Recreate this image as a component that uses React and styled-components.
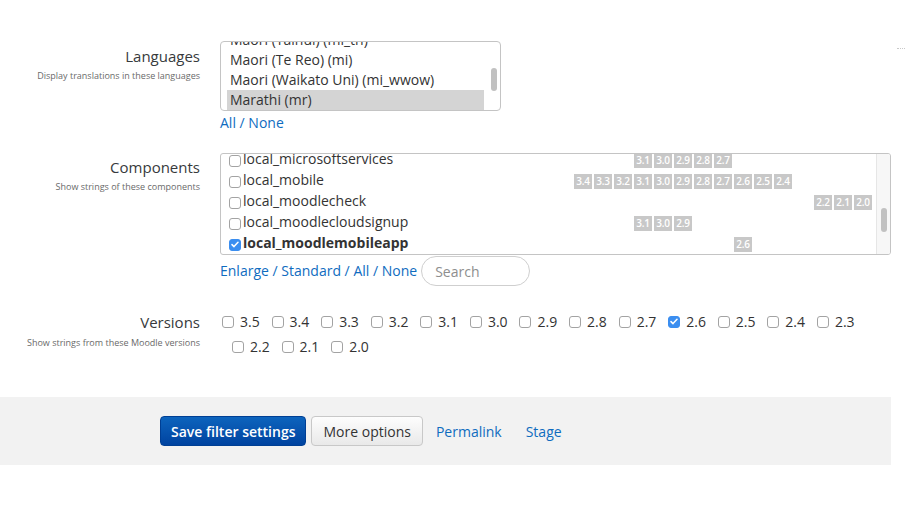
import React from "react";
import styled, { createGlobalStyle } from "styled-components";

const Global = createGlobalStyle`
  html, body { margin: 0; padding: 0; background: #fff; }
  body { font-family: "Open Sans", "Liberation Sans", sans-serif; color: #373a3c; }
  * { box-sizing: border-box; }
`;

const Page = styled.div`
  display: flex;
  width: 905px;
`;

const Main = styled.div`
  width: 891px;
  padding-top: 41px;
`;

const Side = styled.div`
  width: 14px;
  padding: 48px 0 0 6px;
`;

const Dots = styled.div`
  width: 8px;
  border-top: 1px dotted #c8c8c8;
`;

const Form = styled.div`
  display: flex;
  flex-direction: column;
`;

const Row = styled.div`
  display: grid;
  grid-template-columns: 200px 1fr;
  column-gap: 20px;
  margin-top: ${(p) => p.$mt || 0}px;
`;

const LabelCol = styled.div`
  text-align: right;
  padding-top: ${(p) => p.$pt || 0}px;
`;

const Title = styled.div`
  font-size: 15px;
  line-height: 22px;
  color: #373a3c;
`;

const Desc = styled.div`
  font-size: 9px;
  line-height: 13px;
  color: #6a6a6a;
  margin-top: ${(p) => p.$mt || 2}px;
`;

const Content = styled.div`
  display: flex;
  flex-direction: column;
  align-items: flex-start;
`;

const SelectBox = styled.div`
  width: 281px;
  height: 70px;
  border: 1px solid #c4c4c4;
  border-radius: 4px;
  display: flex;
  overflow: hidden;
`;

const OptionList = styled.div`
  flex: 1;
  padding-left: 6px;
  margin-top: -12px;
`;

const Option = styled.div`
  font-size: 14px;
  line-height: 20px;
  height: 20px;
  padding-left: 3px;
  color: #333;
  white-space: nowrap;
  background: ${(p) => (p.$selected ? "#d4d4d4" : "transparent")};
`;

const Track = styled.div`
  width: ${(p) => p.$w}px;
  flex: none;
  padding-left: ${(p) => p.$pl}px;
  padding-top: ${(p) => p.$pt}px;
  background: ${(p) => p.$bg || "transparent"};
  border-left: ${(p) => (p.$border ? "1px solid #e6e6e6" : "none")};
`;

const Thumb = styled.div`
  width: 6px;
  height: ${(p) => p.$h}px;
  border-radius: 3px;
  background: #c1c1c1;
`;

const Links = styled.div`
  display: flex;
  align-items: center;
  font-size: 14px;
  line-height: 22px;
  color: #0f6cbf;
  white-space: pre;
  margin-top: ${(p) => p.$mt || 0}px;
  min-height: ${(p) => p.$h || 22}px;
`;

const Link = styled.a`
  color: #0f6cbf;
  text-decoration: none;
  cursor: pointer;
`;

const CompBox = styled.div`
  width: 671px;
  height: 102px;
  border: 1px solid #c4c4c4;
  border-radius: 3px;
  display: flex;
  overflow: hidden;
`;

const CompList = styled.div`
  flex: 1;
  margin-top: -6px;
  padding: 0 4px 0 8px;
`;

const CompRow = styled.div`
  display: grid;
  grid-template-columns: 1fr 318px;
  height: 21px;
  align-items: end;
`;

const CompName = styled.label`
  display: flex;
  align-items: center;
  gap: 2px;
  font-size: 14px;
  line-height: 21px;
  color: #333;
  font-weight: ${(p) => (p.$checked ? 700 : 400)};
  white-space: nowrap;
`;

const Box = styled.span`
  width: 12px;
  height: 12px;
  flex: none;
  border-radius: 3px;
  border: 1px solid ${(p) => (p.$checked ? "#3b8ef0" : "#a3a3a3")};
  background: ${(p) => (p.$checked ? "#3b8ef0" : "#fff")};
  display: inline-flex;
  align-items: center;
  justify-content: center;
  margin-top: ${(p) => p.$mt || 0}px;
`;

const Badges = styled.div`
  display: grid;
  grid-template-columns: repeat(16, 18px);
  column-gap: 2px;
  padding-bottom: 1px;
`;

const Badge = styled.span`
  height: 15px;
  background: #c8c8c8;
  color: #fff;
  font-size: 10px;
  font-weight: 600;
  line-height: 15px;
  text-align: center;
  letter-spacing: -0.2px;
`;

const Search = styled.input`
  width: 109px;
  height: 30px;
  border: 1px solid #cfcfcf;
  border-radius: 15px;
  padding: 0 13px;
  font-family: "Open Sans", "Liberation Sans", sans-serif;
  font-size: 14px;
  color: #333;
  outline: none;
  margin-left: 4px;
  &::placeholder { color: #8e8e8e; }
`;

const VersionWrap = styled.div`
  padding-left: 12px;
  text-indent: -10px;
  line-height: 25px;
  font-size: 14px;
  width: 671px;
`;

const VersionItem = styled.label`
  display: inline-flex;
  align-items: center;
  gap: 6px;
  text-indent: 0;
  margin-right: 11.9px;
  color: #333;
  font-size: 14px;
  line-height: 25px;
  vertical-align: top;
`;

const Footer = styled.div`
  margin-top: 38px;
  background: #f2f2f2;
  height: 68px;
  display: flex;
  align-items: center;
  padding-left: 160px;
  gap: 5px;
`;

const PrimaryButton = styled.button`
  height: 30px;
  padding: 0 10px;
  border-radius: 4px;
  border: 1px solid #003f94;
  background: linear-gradient(#0d64bd, #0043a0);
  color: #fff;
  font-family: "Open Sans", "Liberation Sans", sans-serif;
  font-weight: 600;
  font-size: 14px;
`;

const SecondaryButton = styled.button`
  height: 30px;
  padding: 0 11px;
  border-radius: 4px;
  border: 1px solid #c8c8c8;
  background: linear-gradient(#fdfdfd, #e9e9e9);
  color: #333;
  font-family: "Open Sans", "Liberation Sans", sans-serif;
  font-size: 14px;
`;

const FooterLink = styled.a`
  color: #0f6cbf;
  font-size: 14px;
  margin-left: ${(p) => p.$ml}px;
  text-decoration: none;
`;

const ALL_VERSIONS = ["3.5","3.4","3.3","3.2","3.1","3.0","2.9","2.8","2.7","2.6","2.5","2.4","2.3","2.2","2.1","2.0"];

const components = [
  { name: "local_microsoftservices", versions: ["3.1","3.0","2.9","2.8","2.7"] },
  { name: "local_mobile", versions: ["3.4","3.3","3.2","3.1","3.0","2.9","2.8","2.7","2.6","2.5","2.4"] },
  { name: "local_moodlecheck", versions: ["2.2","2.1","2.0"] },
  { name: "local_moodlecloudsignup", versions: ["3.1","3.0","2.9"] },
  { name: "local_moodlemobileapp", versions: ["2.6"], checked: true },
];

const languages = [
  "Maori (Tainui) (mi_tn)",
  "Maori (Te Reo) (mi)",
  "Maori (Waikato Uni) (mi_wwow)",
  "Marathi (mr)",
];

const Check = () => (
  <svg width="8" height="7" viewBox="0 0 8 7">
    <path d="M1 3.6 L3 5.6 L7 1.2" fill="none" stroke="#fff" strokeWidth="1.5" strokeLinecap="round" strokeLinejoin="round" />
  </svg>
);

const CheckBox = ({ checked, mt }) => (
  <Box $checked={checked} $mt={mt}>{checked && <Check />}</Box>
);

export default function App() {
  return (
    <>
      <Global />
      <Page>
        <Main>
          <Form>
            <Row>
              <LabelCol $pt={4}>
                <Title>Languages</Title>
                <Desc>Display translations in these languages</Desc>
              </LabelCol>
              <Content>
                <SelectBox>
                  <OptionList>
                    {languages.map((l, i) => (
                      <Option key={l} $selected={i === 3}>{l}</Option>
                    ))}
                  </OptionList>
                  <Track $w={16} $pl={7} $pt={26}>
                    <Thumb $h={23} />
                  </Track>
                </SelectBox>
                <Links $mt={1}>
                  <Link>All</Link>{" / "}<Link>None</Link>
                </Links>
              </Content>
            </Row>

            <Row $mt={19}>
              <LabelCol $pt={3}>
                <Title>Components</Title>
                <Desc>Show strings of these components</Desc>
              </LabelCol>
              <Content>
                <CompBox>
                  <CompList>
                    {components.map((c) => (
                      <CompRow key={c.name}>
                        <CompName $checked={c.checked}>
                          <CheckBox checked={c.checked} mt={4} />
                          {c.name}
                        </CompName>
                        <Badges>
                          {ALL_VERSIONS.map((v) =>
                            c.versions.includes(v) ? (
                              <Badge key={v}>{v}</Badge>
                            ) : (
                              <span key={v} />
                            )
                          )}
                        </Badges>
                      </CompRow>
                    ))}
                  </CompList>
                  <Track $w={14} $pl={4} $pt={54} $bg="#f7f7f7" $border>
                    <Thumb $h={24} />
                  </Track>
                </CompBox>
                <Links $mt={1} $h={30}>
                  <Link>Enlarge</Link>{" / "}<Link>Standard</Link>{" / "}<Link>All</Link>{" / "}<Link>None</Link>
                  <Search placeholder="Search" />
                </Links>
              </Content>
            </Row>

            <Row $mt={23}>
              <LabelCol $pt={2}>
                <Title>Versions</Title>
                <Desc $mt={3}>Show strings from these Moodle versions</Desc>
              </LabelCol>
              <VersionWrap>
                {ALL_VERSIONS.map((v) => (
                  <VersionItem key={v}>
                    <CheckBox checked={v === "2.6"} />
                    {v}
                  </VersionItem>
                ))}
              </VersionWrap>
            </Row>
          </Form>
          <Footer>
            <PrimaryButton>Save filter settings</PrimaryButton>
            <SecondaryButton>More options</SecondaryButton>
            <FooterLink $ml={8}>Permalink</FooterLink>
            <FooterLink $ml={19}>Stage</FooterLink>
          </Footer>
        </Main>
        <Side>
          <Dots />
        </Side>
      </Page>
    </>
  );
}
